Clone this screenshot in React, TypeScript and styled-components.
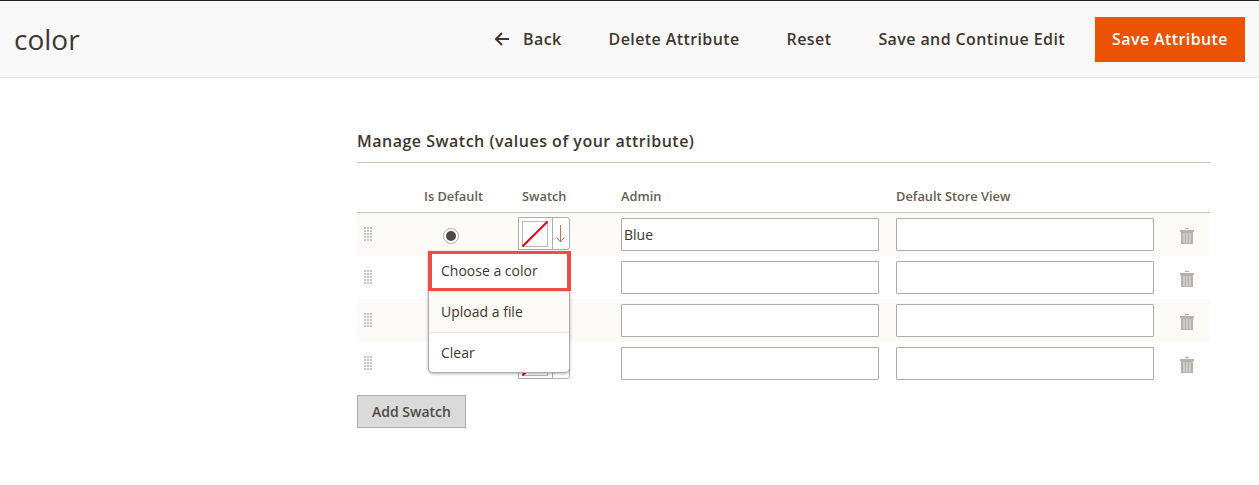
import React from 'react';
import styled, { createGlobalStyle } from 'styled-components';

const GlobalStyle = createGlobalStyle`
  html, body {
    margin: 0;
    padding: 0;
    background: #fff;
    font-family: 'Open Sans', 'Liberation Sans', sans-serif;
    color: #41362f;
  }
  * { box-sizing: border-box; }
`;

const Page = styled.div`
  width: 1259px;
  height: 485px;
  overflow: hidden;
`;

const TopBar = styled.header`
  height: 78px;
  display: flex;
  align-items: center;
  justify-content: space-between;
  padding: 0 14px 0 14px;
  background: #f8f8f8;
  border-top: 1px solid #222;
  border-bottom: 1px solid #e3e3e3;
`;

const Title = styled.h1`
  margin: 0;
  font-size: 28px;
  font-weight: 400;
  line-height: 36px;
  color: #41362f;
`;

const Actions = styled.div`
  display: flex;
  align-items: center;
`;

const ActionLink = styled.button`
  display: flex;
  align-items: center;
  gap: 13px;
  height: 45px;
  padding: 0;
  margin-right: 47px;
  border: 0;
  background: none;
  font-family: inherit;
  font-size: 16px;
  font-weight: 600;
  letter-spacing: 0.4px;
  color: #41362f;
`;

const PrimaryButton = styled.button`
  width: 150px;
  height: 45px;
  margin-left: -17px;
  border: 0;
  background: #eb5202;
  color: #fff;
  font-family: inherit;
  font-size: 16px;
  font-weight: 600;
  letter-spacing: 0.4px;
`;

const Content = styled.main`
  width: 853px;
  margin-left: 357px;
  padding-top: 51px;
`;

const SectionTitle = styled.h2`
  margin: 0;
  height: 34px;
  font-size: 16px;
  font-weight: 600;
  line-height: 24px;
  letter-spacing: 0.5px;
  color: #41362f;
  border-bottom: 1px solid #cac3b4;
`;

const Grid = styled.div`
  display: grid;
  grid-template-columns: 50px 88px 126px 275px 275px 39px;
  align-items: center;
`;

const HeadRow = styled(Grid)`
  height: 50px;
  padding-top: 17px;
  border-bottom: 1px solid #cac3b4;
`;

const HeadCell = styled.div<{ $center?: boolean; $inset?: number }>`
  font-size: 12.8px;
  font-weight: 600;
  color: #675c53;
  text-align: ${(p) => (p.$center ? 'center' : 'left')};
  padding-left: ${(p) => p.$inset ?? 0}px;
`;

const Row = styled(Grid)<{ $odd: boolean }>`
  height: 43px;
  background: ${(p) => (p.$odd ? '#fbfaf6' : '#fff')};
`;

const HandleCell = styled.div`
  padding-left: 7px;
  display: flex;
`;

const RadioCell = styled.div`
  display: flex;
  justify-content: center;
  padding-top: 2px;
`;

const Radio = styled.span`
  width: 16px;
  height: 16px;
  border-radius: 50%;
  border: 1px solid #adadad;
  background: #fff;
  display: flex;
  align-items: center;
  justify-content: center;
  &::after {
    content: '';
    width: 10px;
    height: 10px;
    border-radius: 50%;
    background: #514943;
  }
`;

const SwatchCell = styled.div`
  position: relative;
  padding-left: 23px;
`;

const SwatchControl = styled.div`
  width: 52px;
  height: 33px;
  margin: -1px 0 1px;
  display: flex;
  background: #fff;
  border: 1px solid #adadad;
  border-radius: 0 3px 3px 0;
`;

const SwatchPreview = styled.div`
  width: 34px;
  flex: none;
  padding: 3px;
  border-right: 1px solid #adadad;
`;

const SwatchArrow = styled.div`
  flex: 1;
  display: flex;
  align-items: center;
  justify-content: center;
  padding-right: 1px;
`;

const Menu = styled.ul`
  position: absolute;
  z-index: 2;
  left: -67px;
  top: 33px;
  width: 142px;
  height: 122px;
  margin: 0;
  padding: 0;
  list-style: none;
  background: #fff;
  border: 1px solid #adadad;
  border-radius: 0 0 5px 5px;
  box-shadow: 0 1px 3px rgba(0, 0, 0, 0.3);
  font-size: 14px;
`;

const MenuItem = styled.li<{ $tint?: boolean; $divided?: boolean }>`
  height: ${(p) => (p.$divided ? 41 : 39)}px;
  padding: 0 0 2px 12px;
  display: flex;
  align-items: center;
  background: ${(p) => (p.$tint ? '#fbfaf6' : 'transparent')};
  border-top: ${(p) => (p.$divided ? '1px solid #e3e3e3' : '0')};
  color: #41362f;
`;

const Highlight = styled.div`
  position: absolute;
  z-index: 3;
  left: -1px;
  top: -1px;
  width: 143px;
  height: 40px;
  border: 3px solid #ee4d47;
  border-left-width: 4px;
  border-right-width: 4px;
  pointer-events: none;
`;

const InputCell = styled.div``;

const TextBox = styled.input`
  display: block;
  width: 258px;
  height: 33px;
  padding: 0 2px;
  border: 1px solid #adadad;
  border-radius: 1px;
  background: #fff;
  font-family: inherit;
  font-size: 14px;
  color: #41362f;
  outline: none;
`;

const DeleteCell = styled.div`
  display: flex;
  padding: 2px 0 0 9px;
`;

const AddButton = styled.button`
  display: block;
  width: 109px;
  height: 33px;
  margin-top: 10px;
  border: 1px solid #adadad;
  background: #dadada;
  font-family: inherit;
  font-size: 14px;
  font-weight: 600;
  color: #514943;
`;

const BackArrow = () => (
  <svg width="16" height="14" viewBox="0 0 16 14" fill="none" stroke="#41362f" strokeWidth="2">
    <path d="M15 7H2" />
    <path d="M8 1 2 7l6 6" />
  </svg>
);

const DragHandle = () => (
  <svg width="9" height="15" viewBox="0 0 9 15" fill="#c2c2c2">
    {[0, 3, 6, 9, 12].map((y) =>
      [0, 3, 6].map((x) => <rect key={`${x}-${y}`} x={x} y={y} width="2" height="2" />),
    )}
  </svg>
);

const EmptySwatch = () => (
  <svg width="26" height="26" viewBox="0 0 26 26" style={{ display: 'block' }}>
    <rect x="0.5" y="0.5" width="25" height="25" fill="#fff" stroke="#b8b8b8" />
    <path d="M0.5 25.5 25.5 0.5" stroke="#f0000c" strokeWidth="2" />
  </svg>
);

const DownArrow = () => (
  <svg width="9" height="18" viewBox="0 0 9 18" fill="none" stroke="#c0705c" strokeWidth="1">
    <path d="M4.5 0v16.5" />
    <path d="M.7 12.5l3.8 4.5 3.8-4.5" />
  </svg>
);

const TrashIcon = () => (
  <svg width="14" height="16" viewBox="0 0 14 16">
    <path d="M5 0h4v1H5zM0 2h14v2H0z" fill="#b5b1ad" />
    <path d="M1 4h12v12H1z" fill="#b5b1ad" />
    <path d="M4 5v10M7 5v10M10 5v10" stroke="#e6e4e1" strokeWidth="1" />
  </svg>
);

const rows = ['Blue', '', '', ''];

export default function App() {
  return (
    <Page>
      <GlobalStyle />
      <TopBar>
        <Title>color</Title>
        <Actions>
          <ActionLink>
            <BackArrow />
            Back
          </ActionLink>
          <ActionLink>Delete Attribute</ActionLink>
          <ActionLink>Reset</ActionLink>
          <ActionLink>Save and Continue Edit</ActionLink>
          <PrimaryButton>Save Attribute</PrimaryButton>
        </Actions>
      </TopBar>
      <Content>
        <SectionTitle>Manage Swatch (values of your attribute)</SectionTitle>
        <HeadRow>
          <span />
          <HeadCell $center $inset={5}>Is Default</HeadCell>
          <HeadCell $inset={27}>Swatch</HeadCell>
          <HeadCell>Admin</HeadCell>
          <HeadCell>Default Store View</HeadCell>
          <span />
        </HeadRow>
        {rows.map((value, i) => (
          <Row key={i} $odd={i % 2 === 0}>
            <HandleCell>
              <DragHandle />
            </HandleCell>
            <RadioCell>{i === 0 && <Radio />}</RadioCell>
            <SwatchCell>
              <SwatchControl>
                <SwatchPreview>
                  <EmptySwatch />
                </SwatchPreview>
                <SwatchArrow>
                  <DownArrow />
                </SwatchArrow>
              </SwatchControl>
              {i === 0 && (
                <Menu>
                  <Highlight />
                  <MenuItem>Choose a color</MenuItem>
                  <MenuItem $tint $divided>Upload a file</MenuItem>
                  <MenuItem $divided>Clear</MenuItem>
                </Menu>
              )}
            </SwatchCell>
            <InputCell>
              <TextBox defaultValue={value} />
            </InputCell>
            <InputCell>
              <TextBox />
            </InputCell>
            <DeleteCell>
              <TrashIcon />
            </DeleteCell>
          </Row>
        ))}
        <AddButton>Add Swatch</AddButton>
      </Content>
    </Page>
  );
}
